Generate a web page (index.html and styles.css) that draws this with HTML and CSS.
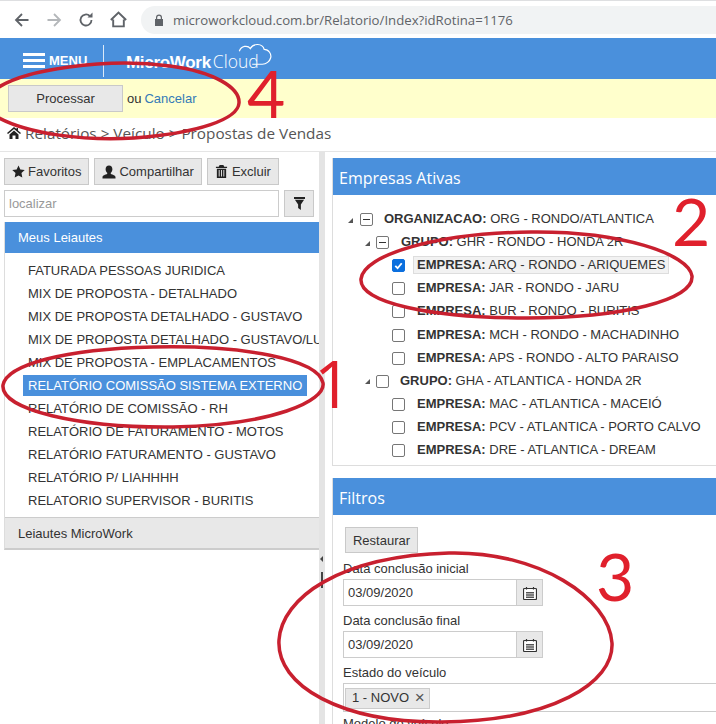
FILE: index.html
```html
<!DOCTYPE html>
<html lang="pt-BR">
<head>
<meta charset="utf-8">
<title>Propostas de Vendas</title>
<link rel="stylesheet" href="styles.css">
</head>
<body>
<div class="page">
  <div class="chrome">
    <svg class="nav nav-back" viewBox="0 0 16 16"><path d="M14.500 8H2M8 2 2 8l6 6"/></svg>
    <svg class="nav nav-fwd" viewBox="0 0 16 16"><path d="M1.500 8H14M8 2l6 6-6 6"/></svg>
    <svg class="nav nav-reload" viewBox="0 0 16 16"><path d="M13.500 8A5.500 5.500 0 1 1 11.800 4"/><path class="fill" d="M9.500 5.500h5v-5z"/></svg>
    <svg class="nav nav-home" viewBox="0 0 16 16"><path d="M3 8v6.500h10V8M.8 8.500 8 1.500l7.200 7"/></svg>
    <div class="url">
      <svg class="lock" viewBox="0 0 10 12"><path d="M2 5V3.500a3 3 0 0 1 6 0V5h1v7H1V5zm1.200 0h3.600V3.500a1.800 1.800 0 0 0-3.600 0z"/></svg>
      <span>microworkcloud.com.br/Relatorio/Index?idRotina=1176</span>
    </div>
  </div>

  <header class="topbar">
    <div class="menu">
      <span class="burger"><i></i><i></i><i></i></span>
      <span class="menu-label">MENU</span>
    </div>
    <div class="logo">
      <span class="logo-a">MicroWork</span><span class="logo-b">Cloud</span>
      <svg class="cloud" viewBox="0 0 38 26"><path d="M2 9c2-6 9-7 12-3 3-6 13-6 15 1 5 0 8 5 7 9s-5 7-9 7H16"/></svg>
    </div>
  </header>

  <div class="actionbar">
    <button class="btn btn-process">Processar</button>
    <span class="or">ou</span>
    <a class="cancel">Cancelar</a>
  </div>

  <div class="crumb">
    <svg class="crumb-home" viewBox="0 0 14 12"><path d="M7 0 0 6l1 1 6-5 6 5 1-1-3-2.600V1H9.500v1.100zM2.500 7.500V12h3V8.500h3V12h3V7.500L7 3.500z"/></svg>
    <span>Relatórios &gt; Veículo &gt; Propostas de Vendas</span>
  </div>

  <main class="content">
    <aside class="left">
      <div class="tools">
        <button class="btn tool">
          <svg class="ico" viewBox="0 0 14 14"><path d="m7 .5 2 4.400 4.700.6-3.500 3.200.9 4.800L7 11.200l-4.100 2.300.9-4.800L.3 5.500 5 4.900z"/></svg>Favoritos
        </button>
        <button class="btn tool">
          <svg class="ico ico-user" viewBox="0 0 14 14"><path d="M7 .5c2.200 0 3.400 1.600 3.400 3.700 0 1.500-.7 2.900-1.600 3.600v1.100c1.800.7 4.700 1.300 4.700 3v1.600H.500v-1.600c0-1.700 2.900-2.300 4.700-3V7.800C4.300 7.100 3.600 5.700 3.600 4.200 3.600 2.100 4.800.5 7 .5z"/></svg>Compartilhar
        </button>
        <button class="btn tool tool-del">
          <svg class="ico" viewBox="0 0 14 14"><path d="M5 0h4l1 2h3v1.300H1V2h3zM2 4h10v10H2zm2 1.500V12.500h1V5.500zm2.500 0V12.500h1V5.500zm2.500 0V12.500h1V5.500z" fill-rule="evenodd"/></svg>Excluir
        </button>
      </div>
      <div class="search">
        <input class="search-input" placeholder="localizar">
        <button class="btn filter">
          <svg class="ico-filter" viewBox="0 0 12 14"><path d="M0 0h12v2H0zM1 3h10L7.500 8v6l-3-2V8z"/></svg>
        </button>
      </div>
      <div class="accordion">
        <div class="acc-head">Meus Leiautes</div>
        <ul class="list">
          <li>FATURADA PESSOAS JURIDICA</li>
          <li>MIX DE PROPOSTA - DETALHADO</li>
          <li>MIX DE PROPOSTA DETALHADO - GUSTAVO</li>
          <li>MIX DE PROPOSTA DETALHADO - GUSTAVO/LUCAS</li>
          <li>MIX DE PROPOSTA - EMPLACAMENTOS</li>
          <li class="selected"><span>RELATÓRIO COMISSÃO SISTEMA EXTERNO</span></li>
          <li>RELATÓRIO DE COMISSÃO - RH</li>
          <li>RELATÓRIO DE FATURAMENTO - MOTOS</li>
          <li>RELATÓRIO FATURAMENTO - GUSTAVO</li>
          <li>RELATÓRIO P/ LIAHHHH</li>
          <li>RELATORIO SUPERVISOR - BURITIS</li>
        </ul>
        <div class="acc-foot">Leiautes MicroWork</div>
      </div>
    </aside>

    <div class="splitter">
      <span class="split-arrow"></span>
      <span class="split-grip"></span>
    </div>

    <section class="right">
      <div class="panel panel-tree">
        <h2 class="panel-head">Empresas Ativas</h2>
        <div class="tree">
          <div class="row lvl0"><span class="tri"></span><span class="minus"></span><b>ORGANIZACAO:</b> ORG - RONDO/ATLANTICA</div>
          <div class="row lvl1"><span class="tri"></span><span class="minus"></span><b>GRUPO:</b> GHR - RONDO - HONDA 2R</div>
          <div class="row lvl2"><span class="check on"><svg viewBox="0 0 12 12"><path d="m2.500 6.500 2.500 2.500 4.500-5.500"/></svg></span><span class="hl"><b>EMPRESA:</b> ARQ - RONDO - ARIQUEMES</span></div>
          <div class="row lvl2"><span class="check"></span><span class="lbl"><b>EMPRESA:</b> JAR - RONDO - JARU</span></div>
          <div class="row lvl2"><span class="check"></span><span class="lbl"><b>EMPRESA:</b> BUR - RONDO - BURITIS</span></div>
          <div class="row lvl2"><span class="check"></span><span class="lbl"><b>EMPRESA:</b> MCH - RONDO - MACHADINHO</span></div>
          <div class="row lvl2"><span class="check"></span><span class="lbl"><b>EMPRESA:</b> APS - RONDO - ALTO PARAISO</span></div>
          <div class="row lvl0b"><span class="tri"></span><span class="check"></span><span class="lbl-g"><b>GRUPO:</b> GHA - ATLANTICA - HONDA 2R</span></div>
          <div class="row lvl2"><span class="check"></span><span class="lbl"><b>EMPRESA:</b> MAC - ATLANTICA - MACEIÓ</span></div>
          <div class="row lvl2"><span class="check"></span><span class="lbl"><b>EMPRESA:</b> PCV - ATLANTICA - PORTO CALVO</span></div>
          <div class="row lvl2"><span class="check"></span><span class="lbl"><b>EMPRESA:</b> DRE - ATLANTICA - DREAM</span></div>
        </div>
      </div>

      <div class="panel panel-filter">
        <h2 class="panel-head">Filtros</h2>
        <div class="filters">
          <button class="btn restore">Restaurar</button>
          <label class="field-label first">Data conclusão inicial</label>
          <div class="date">
            <input class="date-input" value="03/09/2020">
            <span class="date-btn"><svg viewBox="0 0 14 14"><path class="cal" d="M1.500 2.500h11a1 1 0 0 1 1 1v9a1 1 0 0 1-1 1h-11a1 1 0 0 1-1-1v-9a1 1 0 0 1 1-1zM3.500 1v2.500M10.500 1v2.500"/><path class="cal-dots" d="M3 6h8v1.500H3zm0 2.300h8v1.400H3zm0 2.200h8V12H3z"/></svg></span>
          </div>
          <label class="field-label">Data conclusão final</label>
          <div class="date">
            <input class="date-input" value="03/09/2020">
            <span class="date-btn"><svg viewBox="0 0 14 14"><path class="cal" d="M1.500 2.500h11a1 1 0 0 1 1 1v9a1 1 0 0 1-1 1h-11a1 1 0 0 1-1-1v-9a1 1 0 0 1 1-1zM3.500 1v2.500M10.500 1v2.500"/><path class="cal-dots" d="M3 6h8v1.500H3zm0 2.300h8v1.400H3zm0 2.200h8V12H3z"/></svg></span>
          </div>
          <label class="field-label">Estado do veículo</label>
          <div class="tagbox"><span class="tag">1 - NOVO <span class="tag-x">×</span></span></div>
          <label class="field-label cut">Modelo do veículo</label>
        </div>
      </div>
    </section>
  </main>

  <svg class="marks" viewBox="0 0 716 724">
    <path d="M-8 92C20 68 110 58 170 66c45 6 70 22 69 37-1 16-40 30-105 35-50 3-105-4-135-20"/>
    <path d="M3 385c4-20 60-36 150-38 90-2 165 12 170 36 3 18-50 42-150 44C80 428 0 410 3 385z"/>
    <path d="M361 279c2-24 75-46 170-47 90-1 158 22 161 44 2 24-70 42-165 42-95 0-168-15-166-39z"/>
    <path d="M279 640c3-42 60-84 170-87 90-2 160 45 163 90 2 40-60 78-170 79-100 1-166-36-163-82z"/>
  </svg>
  <span class="num num1">1</span>
  <span class="num num2">2</span>
  <span class="num num3">3</span>
  <span class="num num4">4</span>
</div>
</body>
</html>
```

FILE: styles.css
```css
* { box-sizing: border-box; }
html, body { margin: 0; padding: 0; background: #fff; }
body { font-family: "Liberation Sans", Arial, sans-serif; font-size: 14px; color: #333; overflow: hidden; }
.page { position: relative; width: 716px; height: 724px; overflow: hidden; }

.chrome { height: 38px; display: flex; align-items: center; padding: 0 0 0 14px; border-top: 1px solid #dedfe1; background: #fff; }
.nav { width: 16px; height: 16px; fill: none; stroke: #5f6368; stroke-width: 1.800; flex: none; }
.nav-fwd { margin-left: 16px; stroke: #b4b7ba; }
.nav-reload { margin-left: 16px; }
.nav-reload .fill { fill: #5f6368; stroke: none; }
.nav-home { margin-left: 16px; width: 17px; height: 17px; }
.url { margin-left: 14px; flex: 1; height: 28px; background: #f1f3f4; border-radius: 14px 0 0 14px; display: flex; align-items: center; padding-left: 13px; font-family: "Open Sans", sans-serif; font-size: 13.200px; color: #5f6368; white-space: nowrap; }
.lock { width: 10px; height: 12px; fill: #5f6368; margin-right: 9px; flex: none; }

.topbar { height: 41px; background: #4a90dc; display: flex; align-items: center; color: #fff; }
.menu { width: 104px; height: 32px; display: flex; align-items: center; padding-left: 23px; border-right: 1px solid #dbe9f8; margin-top: 4px; }
.burger { display: flex; flex-direction: column; gap: 3px; width: 22px; }
.burger i { display: block; height: 3px; background: #fff; }
.menu-label { margin-left: 4px; font-size: 13px; font-weight: 700; }
.logo { margin-left: 22px; display: flex; align-items: baseline; position: relative; height: 22px; margin-top: 2px; }
.logo-a { font-size: 17px; font-weight: 700; letter-spacing: -.3px; }
.logo-b { font-family: "Open Sans", sans-serif; font-size: 17.500px; margin-left: 2px; font-weight: 300; }
.cloud { position: absolute; left: 110px; top: -6px; width: 38px; height: 24px; fill: none; stroke: #fff; stroke-width: 1.300; }

.actionbar { height: 39px; background: #ffffcc; display: flex; align-items: center; padding-left: 8px; font-size: 13px; }
.btn { font-family: "Liberation Sans", Arial, sans-serif; background: #e8e8e8; border: 1px solid #c9c9c9; color: #333; font-size: 13px; padding: 0; }
.btn-process { width: 115px; height: 27px; }
.or { margin-left: 4px; }
.cancel { margin-left: 3px; color: #337ab7; }

.crumb { height: 34px; border-bottom: 1px solid #e5e5e5; display: flex; align-items: center; padding-left: 7px; padding-bottom: 4px; font-family: "Open Sans", sans-serif; font-size: 15.300px; color: #555; }
.crumb-home { width: 14px; height: 12px; fill: #222; margin-right: 4px; flex: none; }

.content { display: flex; height: 572px; }
.left { width: 319px; padding: 6px 0 0 4px; flex: none; }
.tools { display: flex; gap: 5px; }
.tool { height: 27px; padding: 0 7px; display: flex; align-items: center; font-size: 13px; gap: 3px; white-space: nowrap; }
.tool-del { gap: 4px; }
.ico { width: 13px; height: 13px; fill: #222; flex: none; }
.ico-user { width: 14px; height: 14px; }
.search { display: flex; gap: 5px; margin-top: 5px; }
.search-input { width: 275px; height: 27px; border: 1px solid #ccc; padding: 0 4px; font-family: "Liberation Sans", Arial, sans-serif; font-size: 13px; outline: 0; }
.search-input::placeholder { color: #999; }
.filter { width: 30px; height: 27px; display: flex; align-items: center; justify-content: center; }
.ico-filter { width: 11px; height: 13px; fill: #222; }
.accordion { margin-top: 5px; border-left: 1px solid #ddd; border-bottom: 2px solid #ccc; }
.acc-head { height: 31px; background: #4a90dc; color: #fff; font-size: 13px; font-weight: 400; display: flex; align-items: center; padding-left: 13px; }
.list { list-style: none; margin: 0; padding: 6px 0 6px 18px; height: 264px; overflow: hidden; }
.list li { height: 23px; line-height: 23px; font-size: 13px; white-space: nowrap; padding-left: 5px; color: #333; }
.list li.selected { background: linear-gradient(#fff 1px, #4a90dc 1px, #4a90dc 22px, #fff 22px); color: #fff; margin-right: 12px; }
.acc-foot { height: 31px; background: #e8e8e8; border-top: 1px solid #ccc; display: flex; align-items: center; padding-left: 13px; font-size: 13px; }

.splitter { width: 13px; flex: none; position: relative; }
.splitter::before { content: ""; position: absolute; left: 0; top: 0; bottom: 0; width: 6px; background: #e4e4e4; }
.split-arrow { position: absolute; left: 1px; top: 404px; border: 3px solid transparent; border-right-color: #444; border-left: 0; }
.split-grip { position: absolute; left: 2px; top: 420px; width: 2px; height: 16px; background: #444; }

.right { flex: 1; min-width: 0; padding-top: 6px; }
.panel { border-left: 1px solid #ddd; }
.panel-tree { height: 308px; border-bottom: 1px solid #ddd; }
.panel-head { margin: 0; height: 37px; background: #4a90dc; color: #fff; font-family: "Open Sans", sans-serif; font-size: 16px; font-weight: 400; display: flex; align-items: center; padding: 3px 0 0 6px; }
.tree { padding-top: 12px; font-size: 13px; }
.row { height: 23.100px; display: flex; align-items: center; white-space: pre; }
.row b { font-weight: 700; }
.tri { width: 0; height: 0; border-left: 5px solid transparent; border-bottom: 5px solid #555; margin-top: 3px; flex: none; }
.minus { width: 13px; height: 13px; border: 1px solid #777; border-radius: 2px; position: relative; flex: none; margin-left: 7px; margin-right: 11px; top: 1px; }
.minus::after { content: ""; position: absolute; left: 2px; right: 2px; top: 5px; height: 1px; background: #333; }
.lvl0 { padding-left: 15px; }
.lvl1 { padding-left: 32px; }
.lvl1 .minus { margin-left: 6px; margin-right: 12px; }
.lvl2 { padding-left: 59px; }
.lvl0b { padding-left: 32px; }
.lvl0b .check { margin-left: 6px; }
.lbl-g { margin-left: 11px; }
.check { width: 13px; height: 13px; border: 1px solid #767676; border-radius: 2px; background: #fff; flex: none; display: flex; position: relative; top: 1px; }
.check.on { background: #0b6fde; border-color: #0b6fde; }
.check svg { width: 100%; height: 100%; fill: none; stroke: #fff; stroke-width: 2; }
.lbl { margin-left: 12px; }
.hl { margin-left: 8px; padding: 0 3px; background: #f2f2f2; border: 1px solid #ddd; height: 18px; display: flex; align-items: center; }

.panel-filter { margin-top: 12px; }
.filters { padding: 12px 0 0 10px; }
.restore { display: block; width: 73px; height: 26px; margin-left: 2px; }
.field-label { display: block; font-size: 13px; line-height: 14px; margin-top: 6px; height: 19px; padding-top: 2px; }
.field-label.first { margin-top: 7px; }
.date { display: flex; width: 200px; height: 27px; }
.date-input { flex: 1; min-width: 0; height: 27px; border: 1px solid #ccc; border-right: 0; padding: 0 4px; font-family: "Liberation Sans", Arial, sans-serif; font-size: 13px; color: #333; outline: 0; }
.date-btn { width: 27px; background: #e8e8e8; border: 1px solid #ccc; display: flex; align-items: center; justify-content: center; flex: none; }
.date-btn svg { width: 14px; height: 14px; }
.cal { fill: #fff; stroke: #333; stroke-width: 1.200; }
.cal-dots { fill: #555; }
.tagbox { height: 29px; border: 1px solid #ccc; border-right: 0; padding: 4px 0 0 1px; }
.tag { display: flex; align-items: center; height: 21px; width: 85px; background: #e8e8e8; border: 1px solid #ccc; padding: 0 0 3px 6px; font-size: 13px; white-space: pre; }
.tag-x { font-size: 17px; line-height: 1; color: #555; margin-left: 2px; }
.field-label.cut { margin-top: 3px; }

.marks { position: absolute; left: 0; top: 0; width: 716px; height: 724px; fill: none; stroke: #c8202f; stroke-width: 3.500; pointer-events: none; }
.num { position: absolute; color: #e0202c; font-family: "Lato", sans-serif; font-weight: 400; font-size: 66px; line-height: 66px; }
.num1 { left: 314px; top: 349px; font-family: "Open Sans", sans-serif; }
.num2 { left: 672px; top: 188px; }
.num3 { left: 596px; top: 543px; }
.num4 { left: 247px; top: 60px; }
```
